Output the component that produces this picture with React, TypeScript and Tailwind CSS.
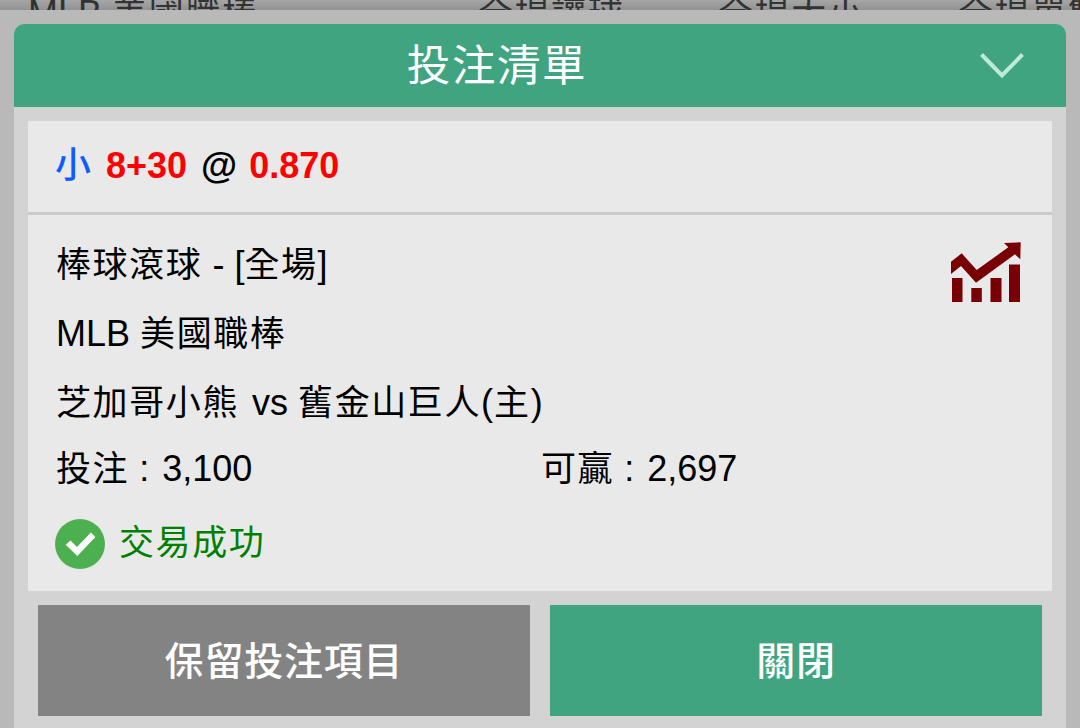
import { useState } from 'react';

const bet = {
    side: '小',
    line: '8+30',
    odds: '0.870',
    stake: '3,100',
    win: '2,697',
};

function ChartIcon() {
    return (
        <svg width="72" height="62" viewBox="0 0 72 62" fill="#780004">
            <path d="M1 20.7 11.7 12.3 26.7 29 58.3 6.3 54 2 70.7 1.3 70.3 18.3 65 13.3 26 41.7 11 25 1 33z" />
            <rect x="2" y="37" width="10.5" height="24" />
            <rect x="21.3" y="47" width="10.5" height="14" />
            <rect x="40.5" y="37" width="11" height="24" />
            <rect x="59" y="23.5" width="11" height="37.5" />
        </svg>
    );
}

function SuccessIcon() {
    return (
        <svg className="-ml-px" width="50" height="50" viewBox="0 0 50 50">
            <circle cx="25" cy="25" r="25" fill="#4caf50" />
            <path d="M10.7 25.8 15.5 21.6 22 28 35.9 13.6 40.5 18 22.3 37z" fill="#fff" />
        </svg>
    );
}

function Cjk({ children }: { children: React.ReactNode }) {
    return <span className="text-[35px] tracking-[1.6px]">{children}</span>;
}

export default function App() {
    const [open, setOpen] = useState(true);

    return (
        <div className="h-[728px] w-[1080px] overflow-hidden bg-[#b9b9b9] font-['Liberation_Sans','Noto_Sans_CJK_TC',sans-serif] text-[36px] text-black">
            {/* odds table header behind the slip */}
            <div className="h-[10px] overflow-hidden bg-linear-to-b from-[#a6a6a6] to-[#929292] text-[#333]">
                <div className="-mt-[6px] flex h-10 pl-7 leading-10 whitespace-nowrap">
                    <span className="w-[450px] shrink-0">MLB <Cjk>美國職棒</Cjk></span>
                    <span className="w-60 shrink-0"><Cjk>全場讓球</Cjk></span>
                    <span className="w-60 shrink-0"><Cjk>全場大小</Cjk></span>
                    <span className="shrink-0"><Cjk>全場單雙</Cjk></span>
                </div>
            </div>

            <div className="mx-[14px] mt-[14px] h-[704px] overflow-hidden rounded-t-[10px] bg-[#d3d3d3]">
                <header className="flex h-[83px] items-center bg-[#41a481] text-white">
                    <h1 className="flex-1 pt-px text-center text-[43.5px] leading-[80px] tracking-[1.6px]">
                        投注清單
                    </h1>
                    <button type="button" className="mr-[42px] w-11" onClick={() => setOpen(!open)}>
                        <svg width="44" height="28" viewBox="0 0 44 28" fill="none" stroke="#bfead9" strokeWidth="4">
                            <path d="M1.5 2.5 22 23.5 42.5 2.5" />
                        </svg>
                    </button>
                </header>

                <section className="mx-[14px] mt-[14px] h-[470px] bg-[#e9e9e9]">
                    <div className="flex h-[94px] items-center gap-[14px] border-b-3 border-[#cbcbcb] pb-px pl-7 font-bold leading-[90px]">
                        <span className="-ml-px mr-px font-medium text-[#0d5cff]">{bet.side}</span>
                        <span className="text-[#ff0000]">{bet.line}</span>
                        <span className="text-[37px]">@</span>
                        <span className="-ml-[2px] text-[#ff0000]">{bet.odds}</span>
                    </div>

                    <div className="flex justify-between pt-[15px] pr-[30px] pl-7">
                        <div className="w-[800px]">
                            <p className="h-[69px] leading-[69px]"><Cjk>棒球滾球</Cjk> - [<Cjk>全場</Cjk>]</p>
                            <p className="h-[69px] leading-[69px]">MLB <Cjk>美國職棒</Cjk></p>
                            <p className="h-[69px] leading-[69px]">
                                <Cjk>芝加哥小熊</Cjk><span className="ml-[3px]"> vs </span><Cjk>舊金山巨人</Cjk>
                                <span className="tracking-[1px]">(<Cjk>主</Cjk>)</span>
                            </p>
                            <div className="flex h-[64px] leading-[64px]">
                                <p className="w-[485px]"><Cjk>投注</Cjk> : <span className="ml-[3px]">{bet.stake}</span></p>
                                <p><Cjk>可贏</Cjk> : <span className="ml-[3px]">{bet.win}</span></p>
                            </div>
                            <div className="flex h-[85px] items-center gap-[14px] text-[#008000]">
                                <SuccessIcon />
                                <Cjk>交易成功</Cjk>
                            </div>
                        </div>
                        <div className="pt-[11px]">
                            <ChartIcon />
                        </div>
                    </div>
                </section>

                <div className="mt-[14px] flex gap-5 px-6 text-[39px] font-medium leading-[111px] tracking-[0.8px] text-white">
                    <button type="button" className="h-[111px] w-[492px] bg-[#838383] pt-px">保留投注項目</button>
                    <button type="button" className="h-[111px] w-[492px] bg-[#41a481] pt-px">關閉</button>
                </div>
            </div>
        </div>
    );
}
